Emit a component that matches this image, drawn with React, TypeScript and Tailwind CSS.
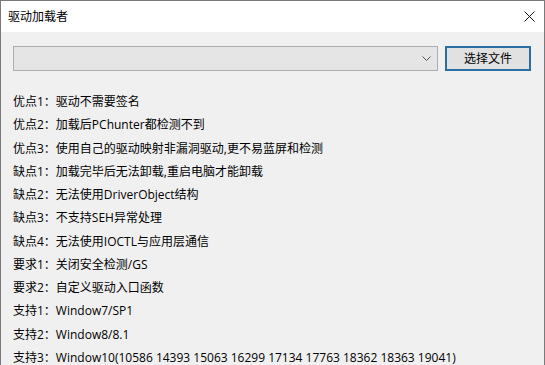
import React from 'react';

const lines = [
  '优点1：驱动不需要签名',
  '优点2：加载后PChunter都检测不到',
  '优点3：使用自己的驱动映射非漏洞驱动,更不易蓝屏和检测',
  '缺点1：加载完毕后无法卸载,重启电脑才能卸载',
  '缺点2：无法使用DriverObject结构',
  '缺点3：不支持SEH异常处理',
  '缺点4：无法使用IOCTL与应用层通信',
  '要求1：关闭安全检测/GS',
  '要求2：自定义驱动入口函数',
  '支持1：Window7/SP1',
  '支持2：Window8/8.1',
  '支持3：Window10(10586 14393 15063 16299 17134 17763 18362 18363 19041)',
];

export default function App() {
  return (
    <div
      className="w-[545px] h-[365px] overflow-hidden border-l border-t border-r border-[#7a7a7a] bg-[#f0f0f0] text-[12px] text-black"
      style={{ fontFamily: '"Open Sans", "Noto Sans CJK SC", sans-serif' }}
    >
      {/* title bar */}
      <div className="h-[31px] bg-white flex items-center justify-between pl-[7px] pr-[10px]">
        <span className="text-[12px]">驱动加载者</span>
        <svg width="11" height="11" viewBox="0 0 11 11" className="-mr-[1px]">
          <path d="M0.5 0.5L10.5 10.5M10.5 0.5L0.5 10.5" stroke="#111" strokeWidth="1" />
        </svg>
      </div>

      {/* file select row */}
      <div className="flex items-start pt-[14px] pl-[12px]">
        <div className="w-[425px] h-[25px] border border-[#adadad] bg-[#e5e5e5] flex items-center justify-end pr-[6px]">
          <svg width="9" height="5" viewBox="0 0 9 5">
            <path d="M0.5 0.5L4.5 4.5L8.5 0.5" stroke="#555" strokeWidth="1" fill="none" />
          </svg>
        </div>
        <button className="ml-[7px] w-[86px] h-[25px] border-2 border-[#2b6ea3] bg-[#e1e1e1] text-[12px] flex items-center justify-center">
          选择文件
        </button>
      </div>

      {/* info list */}
      <div className="pt-[19px] pl-[12px] flex flex-col">
        {lines.map((t) => (
          <div key={t} className="h-[23.27px] leading-[23.27px] whitespace-nowrap">
            {t}
          </div>
        ))}
      </div>
    </div>
  );
}
